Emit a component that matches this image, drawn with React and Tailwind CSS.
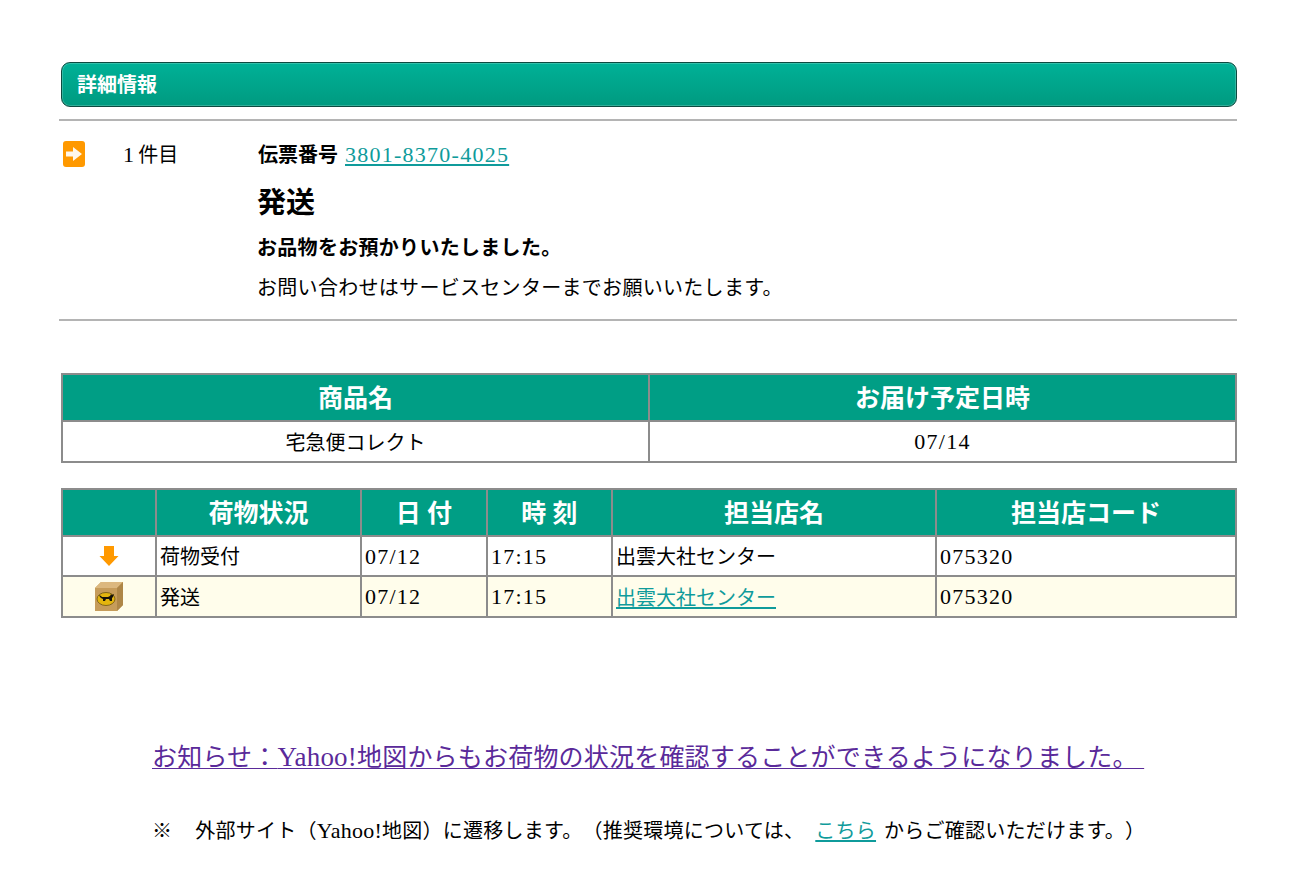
import React from "react";

const serif = "font-['Liberation_Serif','Noto_Sans_CJK_JP',serif] [text-spacing-trim:space-all]";

const Num = ({ children }) => (
  <span className="text-[22px] tracking-[1.25px]">{children}</span>
);

const ArrowRightIcon = () => (
  <svg width="22" height="26" viewBox="0 0 22 26" className="block">
    <rect x="0" y="0" width="22" height="26" rx="3" fill="#ff9900" />
    <path d="M3 10.500h7V6l9 7-9 7v-4.500H3z" fill="#fff7ea" />
  </svg>
);

const ArrowDownIcon = () => (
  <svg width="22" height="24" viewBox="0 0 22 24" className="block">
    <path d="M6 2h10v10h4.500L11 22 1.500 12H6z" fill="#ff9900" />
  </svg>
);

const BoxIcon = () => (
  <svg width="30" height="31" viewBox="0 0 30 31" className="block">
    <path d="M1 7l6-6h22v23l-6 6H1z" fill="#c69c5a" />
    <path d="M1 7l6-6h22l-6 6z" fill="#dcb87e" />
    <path d="M23 7l6-6v23l-6 6z" fill="#ae8647" />
    <ellipse cx="12" cy="18" rx="9" ry="6.500" fill="#e3b50e" stroke="#6d5410" strokeWidth="0.8" />
    <path d="M5 14l2 1 1 1h6l2-1 1-2 1 1 2-1-1 3-1 1v3h-2l-1-2h-3l-1 2H9v-2l-2-1-1-1z" fill="#17120a" />
  </svg>
);

const Hr = () => <div className="h-[2px] bg-[#b4b4b4]" />;

const Th = ({ children }) => (
  <th className="border-2 border-[#8c8c8c] bg-[#009e85] text-white font-bold text-[25px] h-[47px] p-0 pt-[3px] text-center">
    {children}
  </th>
);

const Td = ({ children, center, jp }) => (
  <td className={`border-2 border-[#8c8c8c] text-[20px] px-[3px] py-0 ${jp ? "pt-[2px]" : ""} ${center ? "text-center" : "text-left"}`}>
    {children}
  </td>
);

const links = "text-[#0f9b9b] underline underline-offset-2";

const rows = [
  { icon: <ArrowDownIcon />, status: "荷物受付", date: "07/12", time: "17:15", store: "出雲大社センター", code: "075320", bg: "bg-white h-[40px]" },
  { icon: <BoxIcon />, status: "発送", date: "07/12", time: "17:15", store: "出雲大社センター", code: "075320", bg: "bg-[#fffdeb] h-[41px]", link: true },
];

export default function App() {
  return (
    <div className={`${serif} bg-white text-black h-[885px] overflow-hidden pt-[62px] pl-[59px] w-[1300px]`}>
      <div className="w-[1178px]">
        <div className="ml-[2px] h-[45px] rounded-[9px] border border-[#0d4a40] bg-gradient-to-b from-[#00b197] to-[#009a80] shadow-[inset_0_0_0_1px_rgba(255,255,255,0.2)] flex items-center pl-[15px] text-white font-bold text-[20px]">
          詳細情報
        </div>

        <div className="mt-[12px]"><Hr /></div>

        <div className="flex pt-[20px] h-[198px]">
          <div className="w-[64px] pl-[4px] shrink-0">
            <ArrowRightIcon />
          </div>
          <div className="w-[134px] shrink-0 text-[20px] leading-[28px]">
            <Num>1</Num><span className="ml-[3px]">件目</span>
          </div>
          <div>
            <div className="leading-[28px] text-[20px]">
              <span className="font-bold ml-[1px]">伝票番号</span>{" "}
              <a href="#" className={`${links} ml-[2px]`}><Num>3801-8370-4025</Num></a>
            </div>
            <div className="font-bold text-[29px] leading-[40px] mt-[14px]">発送</div>
            <div className="font-bold text-[20px] leading-[28px] mt-[11px]">
              <span className="tracking-[0.3px]">お品物をお預かりいたしました。</span>
            </div>
            <div className="text-[20px] leading-[28px] mt-[12px] tracking-[0.3px]">お問い合わせはサービスセンターまでお願いいたします。</div>
          </div>
        </div>
        <Hr />

        <div className="ml-[2px] w-[1174px] mt-[52px]">
          <table className="w-full table-fixed border-collapse">
            <colgroup>
              <col className="w-[587px]" />
              <col className="w-[587px]" />
            </colgroup>
            <thead>
              <tr>
                <Th>商品名</Th>
                <Th>お届け予定日時</Th>
              </tr>
            </thead>
            <tbody>
              <tr className="h-[41px]">
                <Td center jp>宅急便コレクト</Td>
                <Td center><Num>07/14</Num></Td>
              </tr>
            </tbody>
          </table>

          <table className="w-full table-fixed border-collapse mt-[25px]">
            <colgroup>
              <col className="w-[94px]" />
              <col className="w-[205px]" />
              <col className="w-[126px]" />
              <col className="w-[125px]" />
              <col className="w-[324px]" />
              <col className="w-[300px]" />
            </colgroup>
            <thead>
              <tr>
                <Th></Th>
                <Th>荷物状況</Th>
                <Th>日 付</Th>
                <Th>時 刻</Th>
                <Th>担当店名</Th>
                <Th>担当店コード</Th>
              </tr>
            </thead>
            <tbody>
              {rows.map((row, index) => (
                <tr key={index} className={row.bg}>
                  <Td center><div className="flex justify-center">{row.icon}</div></Td>
                  <Td jp>{row.status}</Td>
                  <Td><Num>{row.date}</Num></Td>
                  <Td><Num>{row.time}</Num></Td>
                  <Td jp>{row.link ? <a href="#" className={links}>{row.store}</a> : row.store}</Td>
                  <Td><Num>{row.code}</Num></Td>
                </tr>
              ))}
            </tbody>
          </table>
        </div>

        <div className="mt-[119px] pl-[93px] text-[25px] leading-[40px] whitespace-nowrap tracking-[0.2px]">
          <a href="#" className="text-[#5a2a9a] underline underline-offset-2 decoration-1">
            お知らせ：<span className="text-[27px]">Yahoo!</span>地図からもお荷物の状況を確認することができるようになりました。&nbsp;
          </a>
        </div>

        <div className="mt-[39px] pl-[93px] text-[20px] leading-[28px] whitespace-nowrap tracking-[0.25px]">
          ※<span className="ml-[23px]">外部サイト（</span><span className="text-[22px]">Yahoo!</span>地図）に遷移します。（推奨環境については、
          <a href="#" className={`${links} ml-[11px] mr-[8px]`}>こちら</a>
          からご確認いただけます。）
        </div>
      </div>
    </div>
  );
}
